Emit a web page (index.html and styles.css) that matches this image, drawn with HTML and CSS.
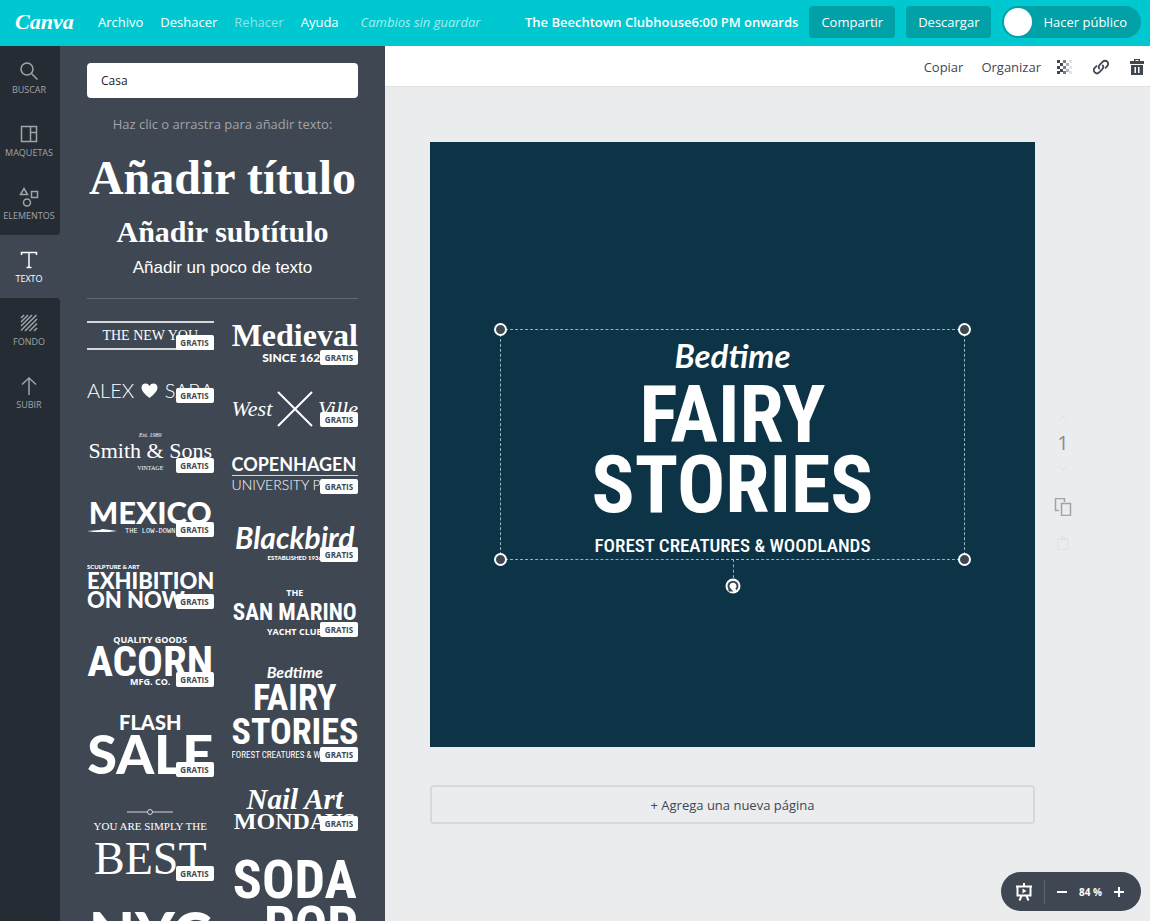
FILE: index.html
```html
<!DOCTYPE html>
<html lang="es">
<head>
  <meta charset="UTF-8">
  <meta name="viewport" content="width=device-width, initial-scale=1.0">
  <title>Canva</title>
  <link rel="stylesheet" href="styles.css">
</head>
<body>
  <header class="topbar">
    <a class="logo" href="#">Canva</a>
    <nav class="menu">
      <a href="#">Archivo</a>
      <a href="#">Deshacer</a>
      <a class="disabled" href="#">Rehacer</a>
      <a href="#">Ayuda</a>
    </nav>
    <em class="status">Cambios sin guardar</em>
    <strong class="doc-title">The Beechtown Clubhouse6:00 PM onwards</strong>
    <button class="top-btn">Compartir</button>
    <button class="top-btn">Descargar</button>
    <label class="public"><input type="checkbox"> Hacer público</label>
  </header>

  <div class="workspace">
    <!-- Navegación lateral -->
    <nav class="rail">
      <div class="rail-group before">
        <button class="rail-btn">
          <svg viewBox="0 0 20 20"><circle cx="8" cy="8" r="6"/><path d="M12.5 12.5l6 6"/></svg>
          BUSCAR
        </button>
        <button class="rail-btn">
          <svg viewBox="0 0 20 20"><path d="M2.5 2.5h15v15h-15zM11.500 2.500v15M11.500 8.500h6"/></svg>
          MAQUETAS
        </button>
        <button class="rail-btn">
          <svg viewBox="0 0 20 20"><path d="M5 1.500l3.500 6h-7zM12.500 4.500h6v6h-6z"/><circle cx="8" cy="15.500" r="3.500"/></svg>
          ELEMENTOS
        </button>
      </div>
      <button class="rail-btn active">
        <svg viewBox="0 0 20 20"><path d="M2.500 5V2.500h15V5M10 2.500v15M7.500 17.500h5"/></svg>
        TEXTO
      </button>
      <div class="rail-group after">
        <button class="rail-btn">
          <svg viewBox="0 0 20 20"><path d="M2 5l3-3M2 9l7-7M2 13L13 2M2 17.500L17.500 2M6 18L18 6M10.500 18l7.500-7.500M15 18l3-3"/></svg>
          FONDO
        </button>
        <button class="rail-btn">
          <svg viewBox="0 0 20 20"><path d="M10 19V2M3 8.500L10 2l7 6.500"/></svg>
          SUBIR
        </button>
      </div>
    </nav>

    <!-- Panel de textos -->
    <aside class="panel">
      <input class="search" type="text" value="Casa" aria-label="Buscar">
      <p class="hint">Haz clic o arrastra para añadir texto:</p>
      <button class="add add-title">Añadir título</button>
      <button class="add add-subtitle">Añadir subtítulo</button>
      <button class="add add-text">Añadir un poco de texto</button>
      <hr>
      <div class="templates">
        <div class="column">
          <button class="template t-newyou">
            <span class="framed">THE NEW YOU</span>
            <span class="badge">GRATIS</span>
          </button>
          <button class="template t-alex">
            <span class="names">ALEX <svg viewBox="0 0 16 16"><path d="M8 15C3 11 0 8 0 4.500 0 0 6-1 8 3c2-4 8-3 8 1.500C16 8 13 11 8 15z"/></svg> SARA</span>
            <span class="badge">GRATIS</span>
          </button>
          <button class="template t-smith">
            <span class="tiny est">Est. 1989</span>
            <span class="name">Smith &amp; Sons</span>
            <span class="tiny vintage">VINTAGE</span>
            <span class="badge">GRATIS</span>
          </button>
          <button class="template t-mexico">
            <span class="name">MEXICO</span>
            <span class="low"><svg viewBox="0 0 30 4"><path d="M0 2l13-1 2-1 8 1 7 1-8 1H7z"/></svg>THE LOW-DOWN</span>
            <span class="badge">GRATIS</span>
          </button>
          <button class="template t-exhibition">
            <span class="tiny">SCULPTURE &amp; ART</span>
            <span class="name">EXHIBITION</span>
            <span class="name">ON NOW</span>
            <span class="badge">GRATIS</span>
          </button>
          <button class="template t-acorn">
            <span class="small">QUALITY GOODS</span>
            <span class="name">ACORN</span>
            <span class="small">MFG. CO.</span>
            <span class="badge">GRATIS</span>
          </button>
          <button class="template t-sale">
            <span class="flash">FLASH</span>
            <span class="name">SALE</span>
            <span class="badge">GRATIS</span>
          </button>
          <button class="template t-best">
            <svg viewBox="0 0 46 6"><path d="M0 3h20M26 3h20"/><circle cx="23" cy="3" r="2.500"/></svg>
            <span class="simply">YOU ARE SIMPLY THE</span>
            <span class="name">BEST</span>
            <span class="badge">GRATIS</span>
          </button>
          <button class="template t-nyc">
            <span class="name">NYC</span>
          </button>
        </div>
        <div class="column">
          <button class="template t-medieval">
            <span class="name">Medieval</span>
            <span class="since">SINCE 1620</span>
            <span class="badge">GRATIS</span>
          </button>
          <button class="template t-west">
            <span class="names">West <svg viewBox="0 0 36 36"><path d="M1 1l34 34M35 1L1 35"/></svg> Ville</span>
            <span class="badge">GRATIS</span>
          </button>
          <button class="template t-copenhagen">
            <span class="name">COPENHAGEN</span>
            <span class="press">UNIVERSITY PRESS</span>
            <span class="badge">GRATIS</span>
          </button>
          <button class="template t-blackbird">
            <span class="name">Blackbird</span>
            <span class="tiny">ESTABLISHED 1936</span>
            <span class="badge">GRATIS</span>
          </button>
          <button class="template t-marino">
            <span class="small">THE</span>
            <span class="name">SAN MARINO</span>
            <span class="small">YACHT CLUB</span>
            <span class="badge">GRATIS</span>
          </button>
          <button class="template t-fairy">
            <span class="script">Bedtime</span>
            <span class="name">FAIRY</span>
            <span class="name">STORIES</span>
            <span class="forest">FOREST CREATURES &amp; WOODLANDS</span>
            <span class="badge">GRATIS</span>
          </button>
          <button class="template t-nail">
            <span class="art">Nail Art</span>
            <span class="name">MONDAYS</span>
            <span class="badge">GRATIS</span>
          </button>
          <button class="template t-soda">
            <span class="name">SODA</span>
            <span class="name pop">POP</span>
          </button>
        </div>
      </div>
    </aside>

    <main class="editor">
      <div class="toolbar">
        <button>Copiar</button>
        <button>Organizar</button>
        <button class="icon" aria-label="Transparencia">
          <svg viewBox="0 0 16 16">
            <path d="M0 1h3v3H0zM0 7h3v3H0zM0 12h3v3H0zM3 4h3v3H3zM3 10h3v3H3z"/>
            <path opacity=".7" d="M6 1h3v3H6zM6 7h3v3H6zM6 12h3v3H6z"/>
            <path opacity=".4" d="M9 4h3v3H9zM9 10h3v3H9z"/>
            <path opacity=".15" d="M12 1h3v3h-3zM12 7h3v3h-3zM12 12h3v3h-3z"/>
          </svg>
        </button>
        <button class="icon" aria-label="Enlace">
          <svg class="line" viewBox="0 0 18 18"><path d="M7.500 11.500a3.500 3.500 0 0 1 0-5L11 3a3.500 3.500 0 0 1 5 5l-2.500 2.500M10.500 6.500a3.500 3.500 0 0 1 0 5L7 15a3.500 3.500 0 0 1-5-5l2.500-2.500"/></svg>
        </button>
        <button class="icon" aria-label="Eliminar">
          <svg viewBox="0 0 16 16"><path fill-rule="evenodd" d="M5 2V0h6v2h4v3H1V2zM6.500 2h3V1h-3zM2 6h12v10H2zM5.500 8v6H7V8zM9 8v6h1.500V8z"/></svg>
        </button>
      </div>

      <div class="stage">
        <div class="pages">
          <section class="page">
            <div class="selection">
              <p class="script">Bedtime</p>
              <p class="headline">FAIRY<br>STORIES</p>
              <p class="forest">FOREST CREATURES &amp; WOODLANDS</p>
              <i class="handle tl"></i>
              <i class="handle tr"></i>
              <i class="handle bl"></i>
              <i class="handle br"></i>
              <span class="rotate">
                <svg viewBox="0 0 16 16"><circle cx="8" cy="8" r="7.500" fill="#fff"/><path d="M5 11.500A4.500 4.500 0 1 1 11 11.500" fill="none" stroke="#3f4652" stroke-width="2"/><path d="M3.500 8.500v5h5z" fill="#3f4652"/></svg>
              </span>
            </div>
          </section>
          <button class="add-page">+ Agrega una nueva página</button>
        </div>
        <div class="page-tools">
          <button class="faint" aria-label="Subir página"><svg viewBox="0 0 16 16"><path d="M3 10l5-5 5 5"/></svg></button>
          <span class="number">1</span>
          <button class="faint" aria-label="Bajar página"><svg viewBox="0 0 16 16"><path d="M3 6l5 5 5-5"/></svg></button>
          <button class="copy" aria-label="Copiar página"><svg viewBox="0 0 18 18"><path d="M5 12.500H1.500v-12h9V4M7.500 5.500h9v12h-9z"/></svg></button>
          <button class="faint" aria-label="Eliminar página"><svg viewBox="0 0 16 16"><path d="M3 4.500h10v10H3zM2 4h12M6 4V2h4v2"/></svg></button>
        </div>
      </div>
    </main>
  </div>

  <div class="zoom">
    <button class="present" aria-label="Presentar">
      <svg viewBox="0 0 18 18"><path d="M1 3.500h16M2.500 3.500v9h13v-9M1.500 12.500h15M9 0v3M6.500 13l-2 4.500M11.500 13l2 4.500" fill="none" stroke="#fff" stroke-width="2"/><path d="M7.500 5.500v5L11.500 8z" fill="#fff"/></svg>
    </button>
    <button aria-label="Alejar"><svg viewBox="0 0 10 10"><path d="M0 5h10" stroke="#fff" stroke-width="2"/></svg></button>
    <span>84 %</span>
    <button aria-label="Acercar"><svg viewBox="0 0 10 10"><path d="M0 5h10M5 0v10" stroke="#fff" stroke-width="2"/></svg></button>
  </div>
</body>
</html>
```
FILE: styles.css
```css
:root {
  --teal: #00c8d0;
  --teal-dark: #00a1a7;
  --rail: #262c34;
  --panel: #3f4753;
  --stage: #ebecee;
  --page: #0c3446;
  --muted: #a0a4a9;
  --sans: "Open Sans", sans-serif;
  --serif: "Liberation Serif", serif;
  --heavy: Lato, sans-serif;
  --narrow: "Roboto Condensed", "Liberation Sans Narrow", "Liberation Sans", sans-serif;
}
*, *::before, *::after { box-sizing: border-box; }
body {
  margin: 0;
  height: 100vh;
  display: flex;
  flex-direction: column;
  overflow: hidden;
  font-family: var(--sans);
  font-size: 13px;
  color: var(--panel);
}
button {
  padding: 0;
  border: 0;
  background: none;
  font: inherit;
  color: inherit;
  cursor: pointer;
}
p { margin: 0; }
svg { display: block; }

/* Barra superior */
.topbar {
  flex: none;
  height: 46px;
  display: flex;
  align-items: center;
  padding: 0 9px 2px 15px;
  background: var(--teal);
  color: #fff;
  white-space: nowrap;
}
.topbar a { color: #fff; text-decoration: none; }
.logo {
  width: 83px;
  font: italic bold 22px/32px var(--serif);
}
.menu { display: flex; gap: 17px; font-weight: 500; }
.menu a.disabled { color: #8ae5e9; font-weight: 400; }
.status { margin-left: 22px; color: #a8ecef; }
.doc-title { margin-left: auto; font-weight: 600; }
.top-btn {
  height: 32px;
  margin-left: 11px;
  padding: 0 12px;
  border-radius: 4px;
  background: var(--teal-dark);
}
.public {
  display: flex;
  align-items: center;
  gap: 11px;
  height: 32px;
  margin-left: 11px;
  padding: 0 14px 0 2px;
  border-radius: 16px;
  background: var(--teal-dark);
}
.public input {
  appearance: none;
  width: 28px;
  height: 28px;
  margin: 0;
  border-radius: 50%;
  background: #fff;
}

.workspace { flex: 1; min-height: 0; display: flex; }

/* Navegación lateral */
.rail {
  flex: none;
  width: 60px;
  display: flex;
  flex-direction: column;
  background: var(--panel);
}
.rail-group { background: var(--rail); }
.before { border-radius: 0 0 4px 0; }
.after { flex: 1; border-radius: 0 4px 0 0; }
.rail-btn {
  width: 100%;
  height: 63px;
  padding: 2px 2px 0 0;
  display: flex;
  flex-direction: column;
  align-items: center;
  justify-content: center;
  gap: 2px;
  font-size: 9px;
  line-height: 14px;
  color: var(--muted);
}
.rail-btn svg {
  width: 20px;
  height: 20px;
  fill: none;
  stroke: currentColor;
  stroke-width: 1.5;
}
.rail-btn.active { color: #fff; }

/* Panel */
.panel {
  flex: none;
  width: 325px;
  padding: 17px 27px 0;
  overflow: hidden;
  background: var(--panel);
  color: #fff;
}
.search {
  display: block;
  width: 100%;
  height: 35px;
  padding: 0 14px;
  border: 0;
  border-radius: 4px;
  background: #fff;
  color: #222;
  font: 12px var(--sans);
}
.hint {
  margin-top: 16px;
  line-height: 20px;
  text-align: center;
  color: var(--muted);
}
.add { display: block; width: 100%; white-space: nowrap; }
.add-title { margin-top: 20px; font: bold 48px/48px var(--serif); }
.add-subtitle { margin-top: 12px; font: bold 30px/36px var(--serif); }
.add-text { margin-top: 8px; font: 17px/20px "Liberation Sans", sans-serif; }
hr {
  margin: 20px 0 21px;
  border: 0;
  border-top: 1px solid #646a75;
}

/* Plantillas de texto */
.templates { display: grid; grid-template-columns: 1fr 1fr; gap: 18px; }
.column { min-width: 0; display: flex; flex-direction: column; gap: 26px; }
.template {
  position: relative;
  display: flex;
  flex-direction: column;
  justify-content: flex-end;
  font-family: var(--heavy);
  text-align: center;
  white-space: nowrap;
}
.badge {
  position: absolute;
  right: 0;
  bottom: 0;
  width: 38px;
  border-radius: 2px;
  background: #fff;
  color: var(--panel);
  font: bold 8px/15px var(--sans);
  text-align: center;
}
.tiny { font-size: 6px; line-height: 8px; }
.small { font: bold 9px/10px var(--sans); }
.names { display: flex; align-items: center; justify-content: space-between; }

.t-newyou { height: 30px; }
.framed {
  border: solid #d5d7da;
  border-width: 2px 0;
  font: 14px/25px var(--serif);
}
.t-alex { height: 27px; font-size: 20px; font-weight: 300; line-height: 25px; }
.t-alex svg { width: 17px; height: 16px; fill: #fff; }
.t-smith { font-family: var(--serif); }
.t-smith .est { padding-top: 2px; font-style: italic; }
.t-smith .name { font-size: 22px; line-height: 24px; }
.t-smith .vintage { line-height: 10px; }
.t-mexico .name { font-weight: 900; font-size: 31px; line-height: 26px; }
.low {
  display: flex;
  align-items: center;
  gap: 8px;
  font: 7px/12px "Liberation Mono", monospace;
}
.low svg { width: 30px; height: 4px; fill: #fff; }
.t-exhibition { text-align: left; font-weight: 900; }
.t-exhibition .name { font-size: 22px; line-height: 19px; }
.t-acorn .name { font: bold 43px/32px var(--narrow); }
.flash { font-weight: 900; font-size: 20px; line-height: 18px; }
.t-sale .name { font-weight: 900; font-size: 54px; line-height: 46px; }
.t-best { height: 78px; font-family: var(--serif); }
.t-best svg {
  width: 46px;
  height: 6px;
  margin: 0 auto;
  fill: none;
  stroke: #d5d7da;
}
.simply { font-size: 11px; line-height: 22px; }
.t-best .name { font-size: 46px; line-height: 44px; }
.t-nyc { font-weight: 900; font-size: 60px; line-height: 52px; }

.t-medieval .name { font: bold 32px/30px var(--serif); }
.since { font-weight: 900; font-size: 12px; line-height: 15px; }
.t-west { font: italic 22px/36px var(--serif); }
.t-west svg { width: 36px; height: 36px; fill: none; stroke: #fff; stroke-width: 2; }
.t-copenhagen { text-align: left; }
.t-copenhagen .name {
  border-bottom: 1px solid #d5d7da;
  font-weight: 700;
  font-size: 18px;
  line-height: 22px;
}
.press { font-size: 14px; font-weight: 300; line-height: 18px; }
.t-blackbird .name { font: italic 700 30px/34px var(--heavy); }
.t-blackbird .tiny { font-weight: 900; }
.t-marino .name { font: bold 23px/29px var(--narrow); }
.t-fairy .script { font: italic 700 16px/18px var(--heavy); }
.t-fairy .name { font: bold 36px/34px var(--narrow); }
.t-fairy .forest { overflow: hidden; text-align: left; font: 9px/13px var(--narrow); }
.art { font: italic bold 29px/23px var(--serif); }
.t-nail .name { font: bold 24px/20px var(--serif); }
.t-soda { font: bold 54px/46px var(--narrow); }
.pop { text-align: right; }

/* Editor */
.editor { flex: 1; min-width: 0; background: var(--stage); }
.toolbar {
  height: 41px;
  display: flex;
  align-items: center;
  justify-content: flex-end;
  gap: 18px;
  padding: 2px 5px 0 0;
  border-bottom: 1px solid #e0e1e3;
  background: #fff;
}
.toolbar svg { width: 16px; height: 16px; fill: var(--panel); }
.toolbar .icon { margin-left: -2px; }
.toolbar .icon + .icon { margin-left: 2px; }
.toolbar svg.line { fill: none; stroke: var(--panel); stroke-width: 2; }
.stage {
  display: flex;
  gap: 20px;
  padding: 55px 79px 0 45px;
}
.pages { flex: 1; min-width: 0; }
.page {
  aspect-ratio: 1;
  display: grid;
  place-items: center;
  background: var(--page);
  color: #fff;
}
.selection {
  position: relative;
  width: 77%;
  border: 1px dashed #9fb0b8;
  text-align: center;
}
.selection .script { font: italic 700 33px/50px var(--heavy); }
.headline { font: bold 80px/70px var(--narrow); }
.selection .forest { padding-top: 12px; font: 500 19px/27px var(--narrow); }
.handle {
  position: absolute;
  width: 13px;
  height: 13px;
  border: 2px solid #fff;
  border-radius: 50%;
  background: var(--panel);
}
.tl, .tr { top: -7px; }
.bl, .br { bottom: -7px; }
.tl, .bl { left: -7px; }
.tr, .br { right: -7px; }
.rotate {
  position: absolute;
  top: 100%;
  left: 50%;
  padding-top: 19px;
  border-left: 1px dashed #9fb0b8;
  height: 19px;
}
.rotate svg { width: 16px; height: 16px; margin-left: -9px; }
.add-page {
  width: 100%;
  height: 39px;
  margin-top: 38px;
  border: 2px solid #d6d8da;
  border-radius: 4px;
}
.page-tools {
  width: 16px;
  padding-top: 269px;
  display: flex;
  flex-direction: column;
  align-items: center;
  gap: 5px;
}
.page-tools svg { width: 16px; height: 16px; fill: none; stroke: #a0a4a9; }
.page-tools .faint { opacity: 0.15; }
.number { font-size: 20px; line-height: 22px; color: #858b94; }
.page-tools .copy { margin: 18px 0 14px; }
.page-tools .copy svg { width: 18px; height: 18px; stroke-width: 1.5; }

/* Zoom */
.zoom {
  position: fixed;
  right: 9px;
  bottom: 10px;
  height: 39px;
  display: flex;
  align-items: center;
  gap: 12px;
  padding: 0 17px 0 14px;
  border-radius: 20px;
  background: var(--panel);
  color: #fff;
  font-size: 10px;
  font-weight: 700;
}
.zoom svg { width: 10px; height: 10px; }
.zoom .present {
  height: 24px;
  padding-right: 11px;
  border-right: 1px solid #60666f;
}
.zoom .present svg { width: 18px; height: 18px; }
```
